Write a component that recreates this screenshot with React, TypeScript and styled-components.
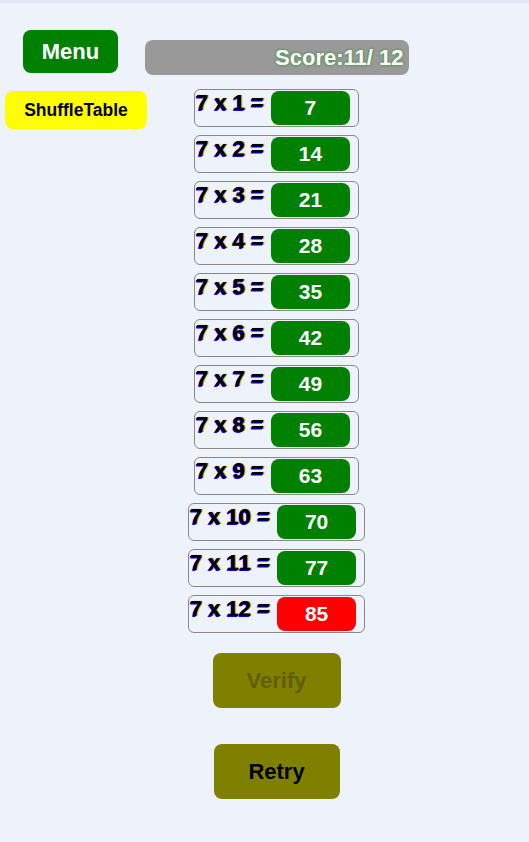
import * as React from 'react';
import styled, { createGlobalStyle } from 'styled-components';

const GlobalStyle = createGlobalStyle`
  html, body {
    margin: 0;
    padding: 0;
    background: #e6e6fa;
  }
  body {
    font-family: 'Liberation Sans', Arial, sans-serif;
    font-kerning: none;
  }
`;

const Page = styled.div`
  margin-top: 3px;
  min-height: 839px;
  background: #eef2fb;
  display: grid;
  grid-template-areas: 'stack';
`;

const Sidebar = styled.div`
  grid-area: stack;
  display: flex;
  flex-direction: column;
  align-items: flex-start;
  padding-top: 27px;
  z-index: 1;
  pointer-events: none;
  & > * {
    pointer-events: auto;
  }
`;

const MenuButton = styled.button`
  margin-left: 23px;
  width: 95px;
  height: 43px;
  border: none;
  border-radius: 8px;
  background: #008000;
  color: #fff;
  font: bold 22px 'Liberation Sans', Arial, sans-serif;
  padding: 0;
`;

const ShuffleButton = styled.button`
  margin-top: 18px;
  margin-left: 5px;
  width: 142px;
  height: 38px;
  border: none;
  border-radius: 8px;
  background: #ffff00;
  color: #000;
  font: bold 17.5px 'Liberation Sans', Arial, sans-serif;
  padding: 0;
`;

const Main = styled.div`
  grid-area: stack;
  display: flex;
  flex-direction: column;
  align-items: center;
  padding-left: 24px;
  padding-top: 37px;
`;

const ScoreBar = styled.div`
  width: 264px;
  height: 35px;
  box-sizing: border-box;
  background: #999999;
  border-radius: 8px;
  display: flex;
  align-items: center;
  justify-content: flex-end;
  padding-right: 5px;
  color: #fff;
  font: bold 22px 'Liberation Sans', Arial, sans-serif;
  text-shadow: 0 0 3px #3c8a3c, 0 0 2px #5a5;
  margin-bottom: 14px;
`;

const Row = styled.div`
  display: flex;
  align-items: flex-start;
  border: 1px solid #888;
  border-radius: 6px;
  padding: 1px 8px 1px 1px;
  margin-bottom: 8px;
`;

const Label = styled.span`
  font: bold 22px 'Liberation Sans', Arial, sans-serif;
  font-kerning: none;
  line-height: 24px;
  color: #000;
  white-space: pre;
  text-shadow: -1px 1px 0 #0000ff, 1px 0 1px #c88a00;
  margin-right: 7px;
`;

const Answer = styled.div<{ $wrong: boolean }>`
  width: 79px;
  height: 34px;
  border-radius: 8px;
  background: ${({ $wrong }) => ($wrong ? '#ff0000' : '#008000')};
  color: #fff;
  display: flex;
  align-items: center;
  justify-content: center;
  font: bold 21px 'Liberation Sans', Arial, sans-serif;
`;

const ActionButton = styled.button<{ $disabled?: boolean }>`
  width: 128px;
  height: 55px;
  border: none;
  border-radius: 8px;
  background: #808000;
  color: ${({ $disabled }) => ($disabled ? '#5f5f00' : '#000')};
  font: bold 22px 'Liberation Sans', Arial, sans-serif;
  padding: 0;
  & + & {
    margin-top: 36px;
    width: 126px;
  }
`;

const Actions = styled.div`
  margin-top: 12px;
  display: flex;
  flex-direction: column;
  align-items: center;
`;

const answers = [7, 14, 21, 28, 35, 42, 49, 56, 63, 70, 77, 85];

export default function App() {
  return (
    <>
      <GlobalStyle />
      <Page>
        <Sidebar>
          <MenuButton>Menu</MenuButton>
          <ShuffleButton>ShuffleTable</ShuffleButton>
        </Sidebar>
        <Main>
          <ScoreBar>Score:11/ 12</ScoreBar>
          {answers.map((a, i) => (
            <Row key={i}>
              <Label>{`7 x ${i + 1} =`}</Label>
              <Answer $wrong={a !== 7 * (i + 1)}>{a}</Answer>
            </Row>
          ))}
          <Actions>
            <ActionButton $disabled>Verify</ActionButton>
            <ActionButton>Retry</ActionButton>
          </Actions>
        </Main>
      </Page>
    </>
  );
}
